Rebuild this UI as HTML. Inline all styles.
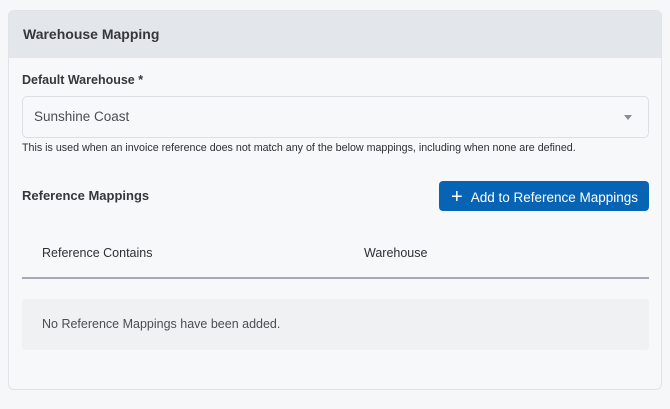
<!DOCTYPE html>
<html><head><style>
*{box-sizing:border-box;margin:0;padding:0}
body{width:670px;height:409px;background:#f6f7f9;font-family:"Liberation Sans",sans-serif;color:#2d2f33;position:relative;overflow:hidden}
.card{position:absolute;left:8px;top:10px;width:654px;height:380px;border:1px solid #e1e3e7;border-radius:6px;background:#f7f8fa;overflow:hidden}
.hdr{height:47px;background:#e3e7eb;padding:15px 14px;font-size:14px;font-weight:bold;color:#35373b}
.a{position:absolute;white-space:nowrap}
</style></head><body>
<div class="card"><div class="hdr">Warehouse Mapping</div></div>
<div class="a" style="left:22px;top:73px;font-size:12.5px;font-weight:bold;color:#35373b">Default Warehouse *</div>
<div class="a" style="left:22px;top:96px;width:627px;height:42px;border:1px solid #dcdfe4;border-radius:5px;background:#f7f8fa"></div>
<div class="a" style="left:34px;top:109px;font-size:13.5px;color:#4a4d52">Sunshine Coast</div>
<div class="a" style="left:624px;top:115px;width:0;height:0;border-left:4px solid transparent;border-right:4px solid transparent;border-top:5px solid #8a8d93"></div>
<div class="a" style="left:22px;top:142px;font-size:10.7px;color:#2d2f33">This is used when an invoice reference does not match any of the below mappings, including when none are defined.</div>
<div class="a" style="left:22px;top:188px;font-size:13px;font-weight:bold;color:#35373b">Reference Mappings</div>
<div class="a" style="left:439px;top:181px;width:210px;height:30px;border-radius:4px;background:#0764b5;color:#fff;font-size:13.5px;line-height:30px;padding-left:12px"><span style="font-size:20px;position:relative;top:1px;margin-right:8px">+</span>Add to Reference Mappings</div>
<div class="a" style="left:42px;top:246px;font-size:12.5px">Reference Contains</div>
<div class="a" style="left:364px;top:246px;font-size:12.5px">Warehouse</div>
<div class="a" style="left:22px;top:277px;width:627px;height:2px;background:#a9a8b8"></div>
<div class="a" style="left:22px;top:299px;width:627px;height:51px;background:#f0f1f3;border-radius:4px"></div>
<div class="a" style="left:42px;top:317px;font-size:12.5px;color:#4a4d52">No Reference Mappings have been added.</div>
</body></html>
